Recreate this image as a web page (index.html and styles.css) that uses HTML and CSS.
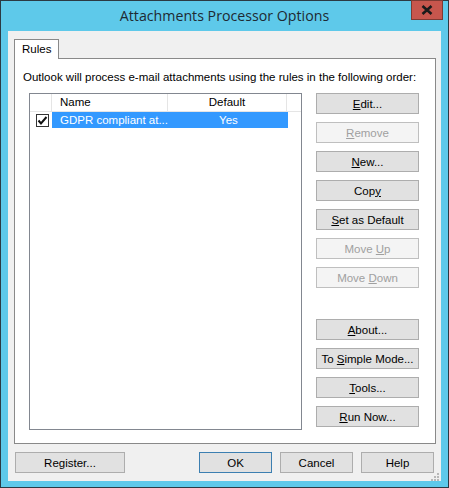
FILE: index.html
```html
<!DOCTYPE html>
<html>
<head>
<meta charset="utf-8">
<link rel="stylesheet" href="styles.css">
</head>
<body>
<div class="window">
  <div class="titlebar">
    <div class="title">Attachments Processor Options</div>
    <div class="close"><svg width="12" height="10" viewBox="0 0 12 10"><path d="M1.5 1 L10.5 9 M10.5 1 L1.5 9" stroke="#1a1a1a" stroke-width="2.6"/></svg></div>
  </div>
  <div class="client">
    <div class="tabs">
      <div class="tab">Rules</div>
    </div>
    <div class="panel">
      <div class="intro">Outlook will process e-mail attachments using the rules in the following order:</div>
      <div class="content">
        <div class="list">
          <div class="lhead">
            <div class="hc c0"></div>
            <div class="hc c1">Name</div>
            <div class="hc c2">Default</div>
            <div class="hc c3"></div>
          </div>
          <div class="lrow">
            <div class="c0"><span class="chk"><svg width="11" height="11" viewBox="0 0 11 11"><path d="M1.5 5.5 L4 8.5 L9.5 2" fill="none" stroke="#111" stroke-width="2"/></svg></span></div>
            <div class="sel">
              <div class="c1">GDPR compliant at...</div>
              <div class="c2">Yes</div>
            </div>
          </div>
        </div>
        <div class="side">
          <div class="group">
            <button class="btn"><u>E</u>dit...</button>
            <button class="btn dis"><u>R</u>emove</button>
            <button class="btn"><u>N</u>ew...</button>
            <button class="btn">Cop<u>y</u></button>
            <button class="btn"><u>S</u>et as Default</button>
            <button class="btn dis">Move <u>U</u>p</button>
            <button class="btn dis">Move <u>D</u>own</button>
          </div>
          <div class="group">
            <button class="btn"><u>A</u>bout...</button>
            <button class="btn">To <u>S</u>imple Mode...</button>
            <button class="btn"><u>T</u>ools...</button>
            <button class="btn"><u>R</u>un Now...</button>
          </div>
        </div>
      </div>
    </div>
    <div class="footer">
      <button class="btn reg">Register...</button>
      <div class="right">
        <button class="btn fb def">OK</button>
        <button class="btn fb">Cancel</button>
        <button class="btn fb">Help</button>
      </div>
    </div>
    <div class="grip"><svg width="8" height="8" viewBox="0 0 8 8"><g fill="#b8b8b8"><rect x="6" y="0" width="2" height="2"/><rect x="3" y="3" width="2" height="2"/><rect x="6" y="3" width="2" height="2"/><rect x="0" y="6" width="2" height="2"/><rect x="3" y="6" width="2" height="2"/><rect x="6" y="6" width="2" height="2"/></g></svg></div>
  </div>
</div>
</body>
</html>
```
FILE: styles.css
```css
html, body { margin: 0; padding: 0; }
body { width: 449px; height: 488px; overflow: hidden; font-family: "Liberation Sans", Arial, sans-serif; font-size: 11.5px; color: #000; }
.window {
  width: 449px; height: 488px; box-sizing: border-box;
  border: 1px solid #2b3a44; background: #5ec9ea;
  display: flex; flex-direction: column;
}
.titlebar { height: 30px; position: relative; display: flex; justify-content: center; align-items: flex-start; }
.title { font-family: "Open Sans", "Noto Sans", sans-serif; font-size: 14.2px; color: #1e2a33; margin-top: 5px; }
.close {
  position: absolute; right: 5px; top: -1px; width: 32px; height: 20px; box-sizing: border-box;
  background: #c7564d; border: 1px solid #7e3a33; display: flex; align-items: center; justify-content: center;
}
.client {
  margin: 0 7px 0 7px; height: 450px; background: #f0f0f0; position: relative;
  display: flex; flex-direction: column;
}
.tabs { height: 27px; display: flex; align-items: flex-end; padding-left: 6px; }
.tab {
  height: 20px; width: 45px; box-sizing: border-box; border: 1px solid #898989; border-bottom: none;
  background: #fff; padding: 3px 0 0 7px; position: relative; top: 1px; z-index: 1;
}
.panel {
  margin-left: 6px; width: 422px; height: 386px; box-sizing: border-box;
  border: 1px solid #898989; background: #fff;
}
.intro { margin: 12px 0 0 8px; height: 22px; }
.content { display: flex; margin-left: 14px; gap: 14px; }
.list { width: 273px; height: 337px; box-sizing: border-box; border: 1px solid #828790; background: #fff; }
.lhead { display: flex; height: 17px; border-bottom: 1px solid #e5e5e5; }
.hc { box-sizing: border-box; border-right: 1px solid #e5e5e5; padding-top: 2px; }
.c0 { width: 22px; flex: none; }
.c1 { width: 116px; flex: none; padding-left: 8px; box-sizing: border-box; }
.c2 { width: 119px; flex: none; text-align: center; }
.c3 { flex: 1; border-right: none; }
.lrow { display: flex; height: 17px; }
.lrow .c0 { display: flex; align-items: center; justify-content: center; padding-left: 3px; box-sizing: border-box; }
.chk { width: 13px; height: 13px; box-sizing: border-box; border: 1px solid #333; background: #fff; display: flex; align-items: center; justify-content: center; }
.sel { display: flex; background: #3399ff; color: #fff; height: 16px; align-items: center; width: 236px; }
.sel .c1 { width: 117px; }
.side { width: 103px; display: flex; flex-direction: column; gap: 31px; }
.group { display: flex; flex-direction: column; gap: 8px; }
.btn {
  font-family: inherit; font-size: 11.5px; color: #000; height: 21px; width: 103px;
  background: #e1e1e1; border: 1px solid #adadad; padding: 0; margin: 0; box-sizing: border-box;
}
.btn.dis { background: #f4f4f4; border-color: #bfbfbf; color: #a0a0a0; }
.footer { display: flex; justify-content: space-between; margin: 8px 7px 0 7px; }
.reg { width: 110px; }
.right { display: flex; gap: 8px; }
.fb { width: 73px; }
.def { border-color: #3c7fb1; }
.grip { position: absolute; right: 2px; bottom: 2px; width: 8px; height: 8px; }
```
